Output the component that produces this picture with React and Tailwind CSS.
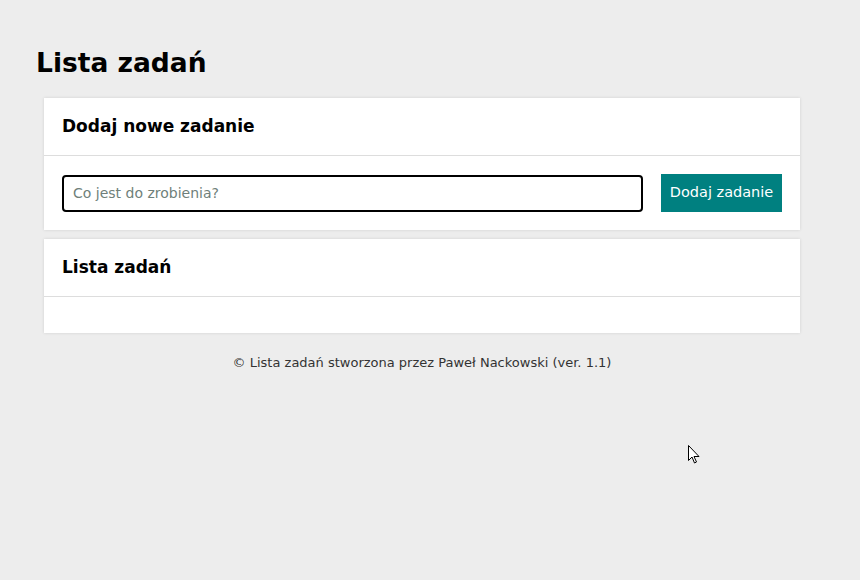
export default function App() {
    return (
        <main className="relative min-h-screen w-full bg-[#ededed] font-['DejaVu_Sans',sans-serif] text-black">
            <div className="ml-[36px] w-[772px] pt-[44px]">
                <h1 className="text-[26.5px] font-bold leading-[38px] mb-[16px]">Lista zadań</h1>

                <section className="mx-2 bg-white shadow-[0_0_3px_rgba(0,0,0,0.12)]">
                    <h2 className="h-[58px] flex items-center px-[18px] text-[17px] font-bold border-b border-[#dddddd]">
                        Dodaj nowe zadanie
                    </h2>
                    <form className="flex items-center gap-[18px] px-[18px] py-[18px]">
                        <input
                            type="text"
                            placeholder="Co jest do zrobienia?"
                            className="flex-1 h-[37px] rounded-[4px] border-2 border-black px-[9px] text-[14px] placeholder:text-[#6f7f7a] outline-none"
                        />
                        <button
                            type="button"
                            className="h-[38px] w-[121px] bg-[#008080] text-white text-[14.5px]"
                        >
                            Dodaj zadanie
                        </button>
                    </form>
                </section>

                <section className="mx-2 mt-[9px] bg-white shadow-[0_0_3px_rgba(0,0,0,0.12)]">
                    <h2 className="h-[58px] flex items-center px-[18px] text-[17px] font-bold border-b border-[#dddddd]">
                        Lista zadań
                    </h2>
                    <ul className="h-[36px]"></ul>
                </section>

                <footer className="mt-[20px] text-center text-[13px] text-[#333333]">
                    © Lista zadań stworzona przez Paweł Nackowski (ver. 1.1)
                </footer>
            </div>

            <svg className="absolute left-[688px] top-[445px]" width="13" height="20" viewBox="0 0 13 20">
                <path d="M0.5 0.5 L0.5 15.5 L4 12 L6.5 18 L8.5 17 L6 11.5 L11 11.5 Z" fill="white" stroke="black" strokeWidth="1" />
            </svg>
        </main>
    );
}
